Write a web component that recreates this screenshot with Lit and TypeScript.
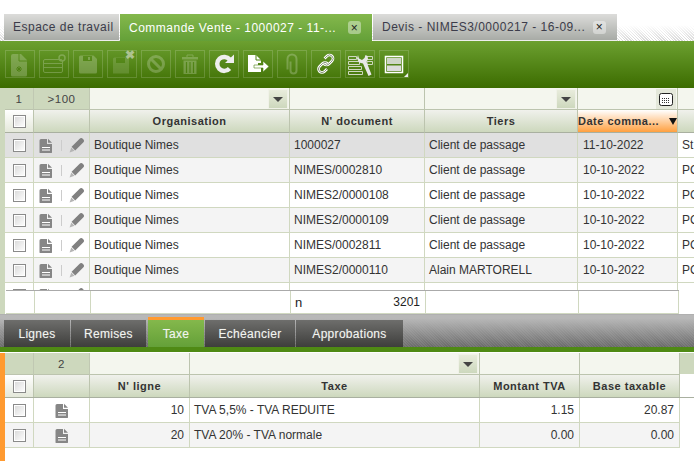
import { LitElement, html, css, svg } from "lit";
import { customElement } from "lit/decorators.js";

const docIcon = (fill = "#868686") => html`<svg class="doc" width="14" height="16" viewBox="0 -1 14 16">
  <path d="M2 1h6v5h5v8a1.500 1.500 0 0 1-1.500 1.500h-9.500A1.500 1.500 0 0 1 .5 14V2.500A1.500 1.500 0 0 1 2 1z" fill="${fill}"/>
  <path d="M9 .8l4 4h-4z" fill="${fill}"/>
  <path d="M3 9.500h8M3 12h8" stroke="#fff" stroke-width="1"/>
</svg>`;

const pencil = html`<svg width="16" height="16" viewBox="0 0 16 16">
  <path d="M2.600 9.800 10.400 2a2.400 2.400 0 0 1 3.600 0 l.2.200a2.400 2.400 0 0 1 0 3.400L6.200 13.400z" fill="#808080"/>
  <path d="M2.300 10.500 5.500 13.800 .6 15.400z" fill="#b4b4b4"/>
</svg>`;

const dropBtn = html`<span class="drop"><i></i></span>`;
const calBtn = html`<span class="cal"><svg width="14" height="13" viewBox="0 0 14 13">
  <rect x=".5" y=".5" width="13" height="12" rx="2" fill="#fff" stroke="#222"/>
  <path d="M3 5.500h8M3 7.500h8M3 9.500h8" stroke="#333" stroke-dasharray="1 1"/>
</svg></span>`;

const toolIcons = [
  { off: true, i: svg`<path d="M8 4h8l6 6v15a1.500 1.500 0 0 1-1.500 1.500h-13A1.500 1.500 0 0 1 6 25V6a2 2 0 0 1 2-2z" fill="#fff"/><path d="M14 4v7h8" fill="none" stroke="#4c8212"/><path d="M14 16v6M11 19h6M12 17l4 4M16 17l-4 4" stroke="#4c8212"/>` },
  { off: true, i: svg`<rect x="4.500" y="9.500" width="19" height="13" rx="1.500" fill="none" stroke="#fff"/><path d="M5 13.500h18M5 17.500h18" stroke="#fff"/><circle cx="23" cy="8" r="3" fill="none" stroke="#fff" stroke-width="1.500"/>` },
  { off: true, i: svg`<path d="M6 7a1.500 1.500 0 0 1 1.500-1.500h13L24 9v13a1.500 1.500 0 0 1-1.500 1.500h-15A1.500 1.500 0 0 1 6 22z" fill="#fff"/><rect x="10" y="6" width="9" height="5" fill="#4c8212"/><rect x="15" y="7" width="2" height="3" fill="#fff"/>` },
  { off: true, dim: true, i: svg`<path d="M6 9a1.500 1.500 0 0 1 1.500-1.500h13L22 9v14.500H6z" fill="#fff" opacity=".6"/><rect x="9" y="8" width="9" height="5" fill="#4c8212"/>`, x: true },
  { off: true, i: svg`<circle cx="15" cy="14" r="7.500" fill="none" stroke="#fff" stroke-width="3"/><path d="M10 9l10 10" stroke="#fff" stroke-width="3"/>` },
  { off: true, i: svg`<path d="M7 7h16v2.500H7z" fill="#fff"/><path d="M12 7V5h6v2" fill="none" stroke="#fff"/><path d="M8.500 10.500h13V24h-13z" fill="#fff"/><path d="M11.500 12v11M15 12v11M18.500 12v11" stroke="#4c8212" stroke-width="1.200"/>` },
  { i: svg`<path d="M20.500 18.500a7 7 0 1 1 .2-9" fill="none" stroke="#eee" stroke-width="4.500"/><path d="M16 13h9v-8.500z" fill="#eee"/>` },
  { i: svg`<path d="M5 5h8l5 5v3h-3v5h3v4H5z" fill="#fff"/><path d="M13 5v5h5" fill="none" stroke="#4c8212"/><path d="M11 15h9v-4l6 5.500-6 5.500v-4h-9z" fill="#fff" stroke="#4c8212" stroke-width=".6"/>` },
  { off: true, i: svg`<path d="M12 11v9a3 3 0 0 0 6 0V8.500a4.500 4.500 0 0 0-9 0V19" transform="translate(1.500 .5)" fill="none" stroke="#fff" stroke-width="2"/>` },
  { i: svg`<path d="M13.500 9.500l2.500-2.500a3.500 3.500 0 0 1 5 5l-3 3a3.500 3.500 0 0 1-5 0M16.500 14.500a3.500 3.500 0 0 0-5 0l-3 3a3.500 3.500 0 0 0 5 5l2.500-2.500" fill="none" stroke="#fff" stroke-width="2.600" transform="translate(0 -1)"/><path d="M13.500 9.500l2.500-2.500a3.500 3.500 0 0 1 5 5l-3 3a3.500 3.500 0 0 1-5 0M16.500 14.500a3.500 3.500 0 0 0-5 0l-3 3a3.500 3.500 0 0 0 5 5l2.500-2.500" fill="none" stroke="#6d7d5c" stroke-width=".8" transform="translate(0 -1)"/>` },
  { i: svg`<path d="M3.500 6.500h8v3h-8zM3.500 11.500h11v3h-11zM3.500 16.500h13v3h-13zM3.500 21.500h14v3h-14zM20.500 6.500h7v3h-7zM22 11.500h5.500v3H22z" fill="none" stroke="#cfd8c0" stroke-width="1"/><path d="M13 5l1 3.500 3 1.500L19.500 8l1-3 2 1 .5 3-1.500 3 5 12.500-3 1.500-5.500-12.500-4-1-2-4z" fill="#e8e8e8"/>` },
  { i: svg`<rect x="6.500" y="6.500" width="17" height="16" fill="none" stroke="#fff" stroke-width="1.500"/><rect x="8" y="8" width="14" height="6" fill="#cfd6c8"/><rect x="8" y="15.500" width="14" height="5.500" fill="#dcdcdc"/>`, corner: true },
];

const rows = [
  ["1000027", "Client de passage", "11-10-2022", "St"],
  ["NIMES/0002810", "Client de passage", "10-10-2022", "PC"],
  ["NIMES2/0000108", "Client de passage", "10-10-2022", "PC"],
  ["NIMES2/0000109", "Client de passage", "10-10-2022", "PC"],
  ["NIMES/0002811", "Client de passage", "10-10-2022", "PC"],
  ["NIMES2/0000110", "Alain MARTORELL", "10-10-2022", "PC"],
  ["", "", "", ""],
];

@customElement("app-root")
export class AppRoot extends LitElement {
  static styles = css`
    :host {
      display: flex;
      flex-direction: column;
      width: 694px;
      height: 461px;
      overflow: hidden;
      background: #fff;
      font-family: "Liberation Sans", Arial, sans-serif;
      font-size: 12px;
      color: #333;
    }
    .tabs {
      height: 41px;
      flex: none;
      box-sizing: border-box;
      padding: 14px 0 0 4px;
      display: flex;
      gap: 1px;
      background:
        linear-gradient(#fff 25px, rgba(255, 255, 255, 0) 41px),
        repeating-linear-gradient(45deg, #d8d8d8 0 1px, #fff 1px 2px);
    }
    .tab {
      height: 27px;
      box-sizing: border-box;
      display: flex;
      align-items: center;
      letter-spacing: 0.5px;
      padding-left: 9px;
      background: linear-gradient(#dcdcda, #a8aba6);
      color: #3c3c4a;
      border-bottom: 1px solid #eee;
    }
    .tab.t1 { width: 115px; }
    .tab.t2 {
      width: 252px;
      background: linear-gradient(#84b84c, #64a038);
      color: #fff;
      border-bottom: 0;
    }
    .tab.t3 { width: 244px; }
    .tab b {
      font-weight: normal;
      flex: 1;
    }
    .x {
      width: 13px;
      height: 13px;
      margin-right: 11px;
      border-radius: 3px;
      background: rgba(255, 255, 255, 0.4);
      color: #222;
      display: flex;
      align-items: center;
      justify-content: center;
    }
    .toolbar {
      height: 47px;
      flex: none;
      box-sizing: border-box;
      padding: 9px 0 0 5px;
      display: flex;
      gap: 4px;
      background: linear-gradient(#6ca030, #3c6c00);
    }
    .tb {
      position: relative;
      width: 30px;
      height: 28px;
      box-sizing: border-box;
      border: 1px solid rgba(255, 255, 255, 0.16);
      flex: none;
    }
    .tb svg { display: block; margin: -1px; }
    .tb.off svg { opacity: 0.22; }
    .tb .mx {
      position: absolute;
      right: 1px;
      top: -1px;
      color: #cfd8c0;
      font-size: 12px;
      line-height: 10px;
      font-weight: bold;
      opacity: 0.7;
    }
    .tb .corner {
      position: absolute;
      right: 0;
      bottom: 0;
      width: 0;
      height: 0;
      border-left: 4px solid transparent;
      border-bottom: 4px solid #eee;
    }
    .panel {
      display: flex;
    }
    .strip {
      width: 5px;
      flex: none;
      background: #cdd8bd;
    }
    .upper { height: 226px; flex: none; }
    .upper .main { width: 689px; overflow: hidden; }
    .row {
      display: grid;
      box-sizing: border-box;
    }
    .up { grid-template-columns: 29px 56px 200px 135px 153px 100px 200px; width: 673px; }
    .low { grid-template-columns: 29px 56px 100px 290px 100px 100px; width: 675px; }
    .filter { height: 22px; background: #fff; }
    .filter > div {
      box-sizing: border-box;
      border-right: 1px solid #bcc4ae;
      border-bottom: 1px solid #bcc4ae;
      background: #f4f6ee;
      display: flex;
      justify-content: flex-end;
      padding: 0 1px 0 0;
    }
    .filter > .num {
      background: #cdd8bd;
      justify-content: center;
      align-items: center;
      color: #444;
      font-size: 11.500px;
      letter-spacing: 0.5px;
      padding: 0;
      border-right-color: #c0c8b2;
    }
    .drop {
      width: 20px;
      height: 20px;
      margin-top: 1px;
      background: linear-gradient(#e8ecdc, #cdd8bd);
      border: 1px solid #f0f2e8;
      box-sizing: border-box;
      display: flex;
      align-items: center;
      justify-content: center;
    }
    .drop i {
      width: 0;
      height: 0;
      border: 5px solid transparent;
      border-top: 5px solid #444;
      border-bottom: 0;
    }
    .cal {
      width: 20px;
      height: 20px;
      margin-top: 1px;
      background: #e4e8da;
      display: flex;
      align-items: center;
      justify-content: center;
    }
    .head { height: 23px; }
    .head > div {
      box-sizing: border-box;
      background: linear-gradient(#f0f1ec, #cdd8bd);
      border-right: 1px solid #bcc4ae;
      border-bottom: 1px solid #a9b0a0;
      display: flex;
      align-items: center;
      justify-content: center;
      font-weight: bold;
      font-size: 11px;
      letter-spacing: 0.5px;
      color: #333;
      white-space: nowrap;
    }
    .head > .chk {
      background: linear-gradient(#fff, #e4e8da);
    }
    .head > .sorted {
      background: linear-gradient(#fff, #ffa040);
      justify-content: flex-start;
      position: relative;
      letter-spacing: 0.5px;
    }
    .sorted i {
      position: absolute;
      right: 0;
      top: 8px;
      border: 4px solid transparent;
      border-top: 7px solid #111;
      border-bottom: 0;
    }
    .data { height: 25px; background: #fff; }
    .data.alt { background: #f4f4f4; }
    .data.sel { background: #e0e0e0; }
    .data > div {
      box-sizing: border-box;
      border-right: 1px solid #d0d8c0;
      border-bottom: 1px solid #d0d8c0;
      display: flex;
      align-items: center;
      padding: 0 5px 0 4px;
      white-space: nowrap;
      overflow: hidden;
    }
    .data > .r { justify-content: flex-end; }
    .data > .c { justify-content: center; padding: 0; }
    .data > .d { padding-left: 5px; }
    .data > .acts { padding: 0 0 0 5px; }
    .sep {
      width: 1px;
      height: 11px;
      background: #ccc;
      margin: 0 7px 0 8px;
    }
    .acts svg { flex: none; }
    .cb {
      width: 13px;
      height: 13px;
      box-sizing: border-box;
      border: 1px solid #8a8a8a;
      background: linear-gradient(135deg, #d8d8d8, #fff);
      box-shadow: inset 0 0 0 1px #fff;
      display: block;
    }
    .body { height: 157px; overflow: hidden; }
    .foot {
      height: 24px;
      margin-left: 1px;
      border-top: 1px solid #aaa;
      border-bottom: 1px solid #d0d8c0;
      background: #fff;
    }
    .foot > div {
      border-right: 1px solid #d0d8c0;
      box-sizing: border-box;
    }
    .foot > .sum {
      display: flex;
      justify-content: space-between;
      align-items: center;
      padding: 0 5px 0 4px;
      color: #222;
    }
    .sumn { font-size: 13px; }
    .subtabs {
      height: 38px;
      flex: none;
      box-sizing: border-box;
      padding: 2px 0 0 4px;
      background:
        linear-gradient(rgba(184, 184, 184, 1) 10%, rgba(110, 110, 110, 0.85)),
        repeating-linear-gradient(45deg, #555 0 1px, #aaa 1px 2px);
      border-top: 1px solid #b0b0b0;
      border-bottom: 5px solid #4f8a14;
      display: flex;
      align-items: flex-end;
      gap: 1px;
    }
    .st {
      height: 27px;
      box-sizing: border-box;
      display: flex;
      align-items: center;
      justify-content: center;
      letter-spacing: 0.3px;
      color: #f2f4f0;
      text-shadow: 0 0 1px rgba(255, 255, 255, 0.35);
      background: linear-gradient(#6e6e6c, #3e3e3c);
    }
    .st.on {
      height: 30px;
      margin: 0 0 0 1px;
      border-top: 3px solid #ff9a30;
      background: linear-gradient(#84b84c, #64a038);
    }
    .lower { flex: 1; padding-top: 1px; }
    .lower .strip { background: #ff9a30; }
    .lowf { display: flex; }
    .lowf .rest { flex: 1; background: #cdd8bd; height: 21px; }
    .lowh { display: flex; border-bottom: 1px solid #a9b0a0; width: 689px; }
    .lowh .row > div { border-bottom: 0; }
    .lowh .row { height: 22px; }
  `;

  private cb() {
    return html`<span class="cb"></span>`;
  }

  private bar() {
    return html`<div class="toolbar">
      ${toolIcons.map(
        (t) => html`<div class="tb ${t.off ? "off" : ""}">
          <svg width="30" height="28" viewBox="0 0 30 28">${t.i}</svg>
          ${t.x ? html`<span class="mx">✖</span>` : ""}
          ${t.corner ? html`<span class="corner"></span>` : ""}
        </div>`
      )}
    </div>`;
  }

  render() {
    return html`
      <div class="tabs">
        <div class="tab t1"><b>Espace de travail</b></div>
        <div class="tab t2"><b>Commande Vente - 1000027 - 11-...</b><span class="x">×</span></div>
        <div class="tab t3"><b>Devis - NIMES3/0000217 - 16-09...</b><span class="x">×</span></div>
      </div>
      ${this.bar()}
      <div class="panel upper">
        <div class="strip"></div>
        <div class="main">
          <div class="row up filter">
            <div class="num">1</div>
            <div class="num">&gt;100</div>
            <div>${dropBtn}</div>
            <div></div>
            <div>${dropBtn}</div>
            <div>${calBtn}</div>
            <div></div>
          </div>
          <div class="row up head">
            <div class="chk">${this.cb()}</div>
            <div></div>
            <div>Organisation</div>
            <div>N' document</div>
            <div>Tiers</div>
            <div class="sorted">Date comma...<i></i></div>
            <div></div>
          </div>
          <div class="body">
            ${rows.map(
              (r, i) => html`<div class="row up data ${i === 0 ? "sel" : i % 2 ? "alt" : ""}">
                <div class="c">${this.cb()}</div>
                <div class="acts">${docIcon()}<span class="sep"></span>${pencil}</div>
                <div>${i < 6 ? "Boutique Nimes" : ""}</div>
                <div>${r[0]}</div>
                <div>${r[1]}</div>
                <div class="d">${r[2]}</div>
                <div>${r[3]}</div>
              </div>`
            )}
          </div>
          <div class="row up foot">
            <div></div>
            <div></div>
            <div></div>
            <div class="sum"><span class="sumn">n</span><span>3201</span></div>
            <div></div>
            <div></div>
            <div></div>
          </div>
        </div>
      </div>
      <div class="subtabs">
        <div class="st" style="width:66px">Lignes</div>
        <div class="st" style="width:75px">Remises</div>
        <div class="st on" style="width:56px">Taxe</div>
        <div class="st" style="width:90px">Echéancier</div>
        <div class="st" style="width:107px">Approbations</div>
      </div>
      <div class="panel lower">
        <div class="strip"></div>
        <div>
          <div class="lowf">
            <div class="row low filter">
              <div class="num"></div>
              <div class="num">2</div>
              <div></div>
              <div>${dropBtn}</div>
              <div></div>
              <div></div>
            </div>
            <div class="rest"></div>
          </div>
          <div class="lowh">
            <div class="row low head">
              <div class="chk">${this.cb()}</div>
              <div></div>
              <div>N' ligne</div>
              <div>Taxe</div>
              <div>Montant TVA</div>
              <div>Base taxable</div>
            </div>
          </div>
          <div class="row low data">
            <div class="c">${this.cb()}</div>
            <div class="c">${docIcon()}</div>
            <div class="r">10</div>
            <div>TVA 5,5% - TVA REDUITE</div>
            <div class="r">1.15</div>
            <div class="r">20.87</div>
          </div>
          <div class="row low data alt">
            <div class="c">${this.cb()}</div>
            <div class="c">${docIcon()}</div>
            <div class="r">20</div>
            <div>TVA 20% - TVA normale</div>
            <div class="r">0.00</div>
            <div class="r">0.00</div>
          </div>
        </div>
      </div>
    `;
  }
}
